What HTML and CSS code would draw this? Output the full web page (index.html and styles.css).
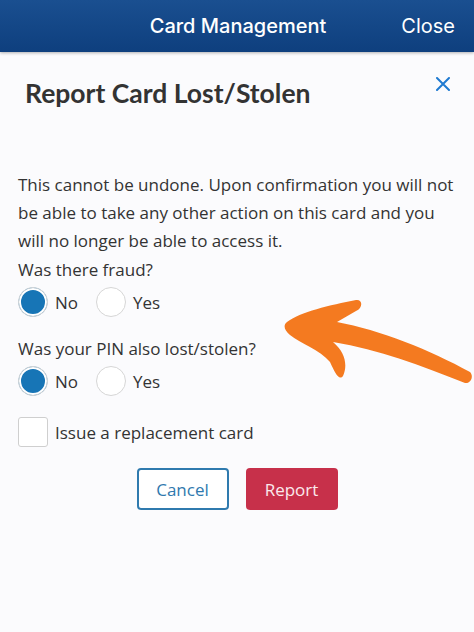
FILE: index.html
```html
<!DOCTYPE html>
<html lang="en">
<head>
  <meta charset="UTF-8">
  <meta name="viewport" content="width=device-width, initial-scale=1.0">
  <title>Card Management</title>
  <link rel="stylesheet" href="styles.css">
</head>
<body>
  <div class="topbar">
    <span class="topbar-title">Card Management</span>
    <span class="topbar-close">Close</span>
  </div>

  <div class="modal">
    <div class="modal-head">
      <h1>Report Card Lost/Stolen</h1>
      <span class="modal-x">
        <svg width="14" height="14" viewBox="0 0 14 14"><path d="M1 1 L13 13 M13 1 L1 13" stroke="#1f7ad1" stroke-width="2" stroke-linecap="round"/></svg>
      </span>
    </div>

    <p class="warning">This cannot be undone. Upon confirmation you will not be able to take any other action on this card and you will no longer be able to access it.</p>

    <div class="question">Was there fraud?</div>
    <div class="radio-row">
      <label class="radio"><span class="dot checked"></span>No</label>
      <label class="radio"><span class="dot"></span>Yes</label>
    </div>

    <div class="question">Was your PIN also lost/stolen?</div>
    <div class="radio-row">
      <label class="radio"><span class="dot checked"></span>No</label>
      <label class="radio"><span class="dot"></span>Yes</label>
    </div>

    <label class="check"><span class="box"></span>Issue a replacement card</label>

    <div class="actions">
      <button class="btn btn-cancel">Cancel</button>
      <button class="btn btn-report">Report</button>
    </div>
  </div>

  <svg class="arrow" width="194" height="100" viewBox="280 290 194 100">
    <path d="M287,322 C300,312 330,305 356,300 C363,299 363,308 356,311 L337,322 C380,330 430,350 470,372 C474,376 471,384 465,383 C420,365 380,350 333,342 C345,352 348,365 343,376 C339,381 335,373 330,362 C320,350 300,343 290,335 C284,330 283,325 287,322 Z" fill="#f47a20"/>
  </svg>
</body>
</html>
```

FILE: styles.css
```css
body {
  margin: 0;
  background: #fbfbfd;
  font-family: "Open Sans", sans-serif;
  color: #333;
  position: relative;
  height: 632px;
  overflow: hidden;
}
.topbar {
  height: 52px;
  background: linear-gradient(#1a4f90, #0e3f7e);
  box-shadow: 0 1px 3px rgba(0,0,0,0.3);
  color: white;
  font-family: Inter, sans-serif;
  font-size: 20px;
  display: flex;
  align-items: center;
  position: relative;
}
.topbar-title {
  flex: 1;
  text-align: center;
  font-weight: 500;
  padding-left: 2px;
}
.topbar-close {
  position: absolute;
  right: 19px;
  top: 14px;
}
.modal {
  padding: 0 18px;
}
.modal-head {
  display: flex;
  justify-content: space-between;
  padding: 21px 6px 0 7px;
  height: 90px;
  box-sizing: border-box;
}
h1 {
  margin: 0;
  font-family: Lato, sans-serif;
  font-weight: bold;
  font-size: 26.5px;
  color: #333;
  line-height: 34px;
  padding-top: 3px;
}
.modal-x {
  margin-top: 1px;
}
.warning {
  margin: 29px 0 0;
  font-size: 17px;
  line-height: 28px;
}
.question {
  font-size: 17px;
  line-height: 28px;
  margin-top: 1px;
}
.radio-row {
  display: flex;
  gap: 18px;
  margin: 3px 0 18px;
}
.radio {
  display: flex;
  align-items: center;
  gap: 7px;
  font-size: 17px;
}
.dot {
  width: 28px;
  height: 28px;
  border-radius: 50%;
  border: 1px solid #d6d6d6;
  background: white;
}
.dot.checked {
  background: #1775b6;
  box-shadow: inset 0 0 0 2px white;
}
.check {
  display: flex;
  align-items: center;
  gap: 7px;
  font-size: 17px;
  margin-top: 21px;
}
.box {
  width: 28px;
  height: 28px;
  border: 1px solid #cfcfcf;
  border-radius: 3px;
  background: white;
}
.actions {
  display: flex;
  justify-content: center;
  gap: 17px;
  margin-top: 21px;
}
.btn {
  width: 92px;
  height: 42px;
  border-radius: 4px;
  font-family: "Open Sans", sans-serif;
  font-size: 17px;
}
.btn-cancel {
  background: white;
  border: 2px solid #2f7aae;
  color: #2f79ae;
}
.btn-report {
  background: #c7304a;
  border: none;
  color: #fbe9ec;
}
.arrow {
  position: absolute;
  left: 280px;
  top: 290px;
}
```
